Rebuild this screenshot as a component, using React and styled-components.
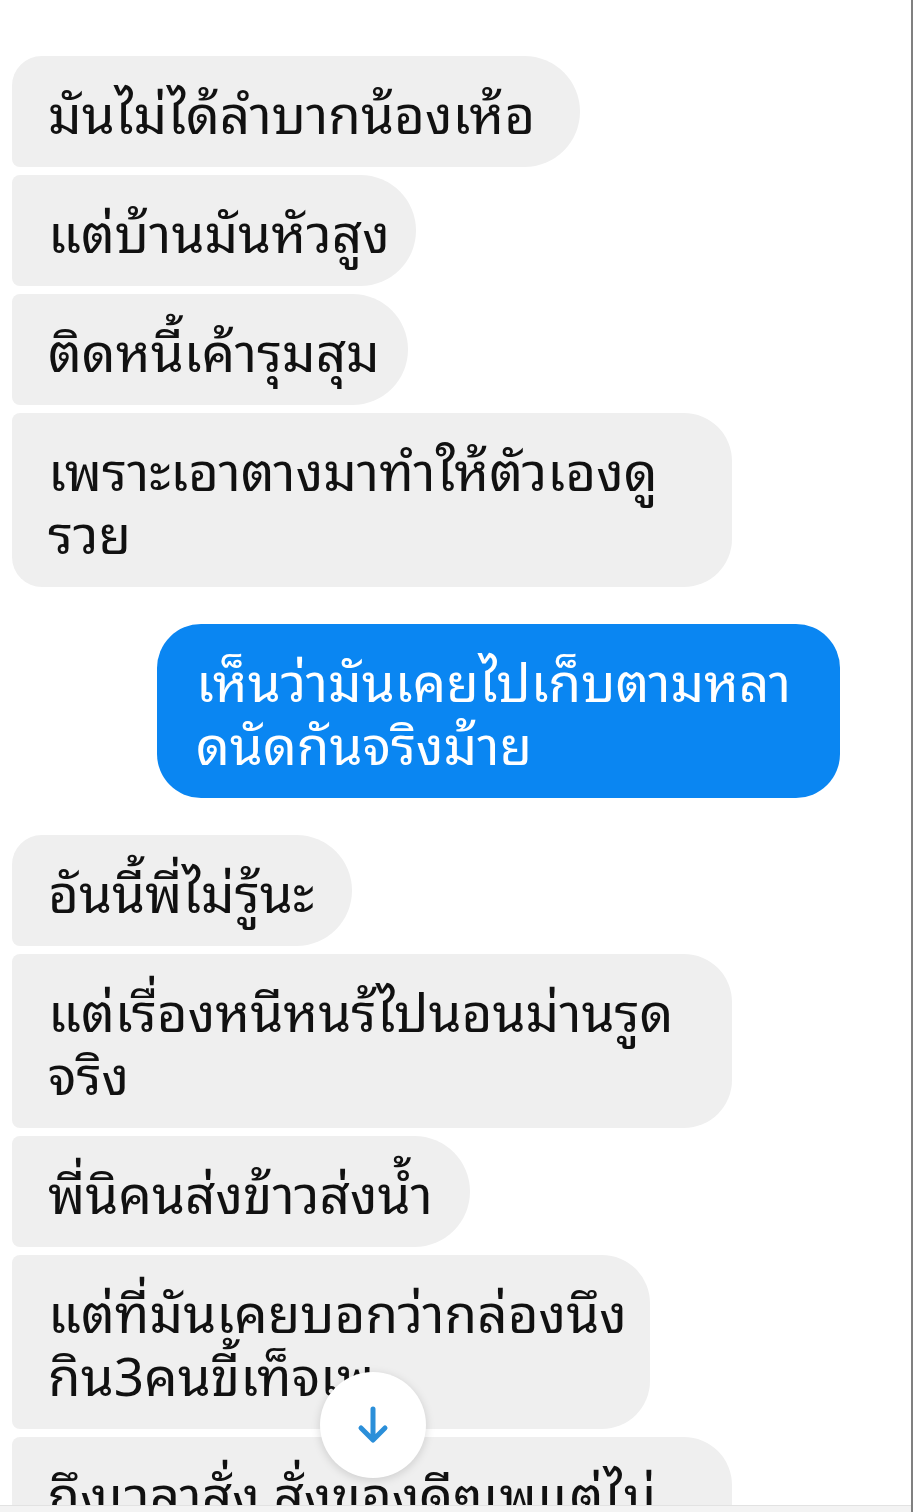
import React from "react";
import styled, { createGlobalStyle } from "styled-components";

const Global = createGlobalStyle`
  html, body { margin: 0; padding: 0; background: #ffffff; overflow: hidden; }
  body { font-family: "Noto Sans Thai Looped", "Noto Sans Thai", "Noto Sans", "DejaVu Sans", sans-serif; }
`;

const Screen = styled.div`
  position: relative;
  width: 913px;
  height: 1512px;
  box-sizing: border-box;
  overflow: hidden;
  background: #ffffff;
  border-right: 2px solid #808080;
`;

const Thread = styled.div`
  display: flex;
  flex-direction: column;
  padding: 56px 0 0 12px;
`;

const Group = styled.div`
  display: flex;
  flex-direction: column;
  align-items: ${(p) => (p.$mine ? "flex-end" : "flex-start")};
  gap: 8px;
  margin-bottom: 37px;
  padding-right: ${(p) => (p.$mine ? "71px" : "0")};
`;

const Bubble = styled.div`
  box-sizing: border-box;
  padding: 23px 30px 25px 36px;
  padding-left: ${(p) => (p.$mine ? "39px" : "36px")};
  font-size: 53px;
  line-height: 63px;
  color: ${(p) => (p.$mine ? "#ffffff" : "#111111")};
  background: ${(p) => (p.$mine ? "#0a86f2" : "#efefef")};
  border-radius: ${(p) => p.$radius};
  white-space: nowrap;
`;

const Line = styled.span`
  display: block;
`;

const ScrollDown = styled.button`
  position: absolute;
  left: 320px;
  top: 1372px;
  width: 106px;
  height: 106px;
  border-radius: 50%;
  border: none;
  background: #ffffff;
  box-shadow: 0 2px 10px rgba(0, 0, 0, 0.15);
  display: flex;
  align-items: center;
  justify-content: center;
  padding: 0;
`;

const BottomEdge = styled.div`
  position: absolute;
  left: 0;
  right: 0;
  bottom: 0;
  height: 6px;
  background: #f3f3f3;
  border-top: 1px solid #e2e2e2;
`;

function radiusFor(pos, big) {
  const r = big ? "48px" : "56px";
  if (pos === "single") return `30px ${r} ${r} 30px`;
  if (pos === "first") return `30px ${r} ${r} 8px`;
  if (pos === "middle") return `8px ${r} ${r} 8px`;
  return `8px ${r} ${r} 30px`;
}

const groups = [
  {
    mine: false,
    items: [
      { lines: ["มันไม่ได้ลำบากน้องเห้อ"], w: 568 },
      { lines: ["แต่บ้านมันหัวสูง"], w: 404 },
      { lines: ["ติดหนี้เค้ารุมสุม"], w: 396 },
      { lines: ["เพราะเอาตางมาทำให้ตัวเองดู", "รวย"], w: 720 },
    ],
  },
  {
    mine: true,
    items: [{ lines: ["เห็นว่ามันเคยไปเก็บตามหลา", "ดนัดกันจริงม้าย"], w: 683 }],
  },
  {
    mine: false,
    items: [
      { lines: ["อันนี้พี่ไม่รู้นะ"], w: 340 },
      { lines: ["แต่เรื่องหนีหนร้ไปนอนม่านรูด", "จริง"], w: 720 },
      { lines: ["พี่นิคนส่งข้าวส่งน้ำ"], w: 458 },
      { lines: ["แต่ที่มันเคยบอกว่ากล่องนึง", "กิน3คนขี้เท็จเพ"], w: 638 },
      { lines: ["ถึงเวลาสั่ง สั่งของดีๆเพแต่ไม่", "จ่าย"], w: 720 },
    ],
  },
];

export default function App() {
  return (
    <>
      <Global />
      <Screen>
        <Thread>
          {groups.map((g, gi) => (
            <Group key={gi} $mine={g.mine}>
              {g.items.map((m, i) => {
                const n = g.items.length;
                let pos = "single";
                if (n > 1) pos = i === 0 ? "first" : i === n - 1 ? "last" : "middle";
                const big = m.lines.length > 1;
                const radius = g.mine ? "44px" : radiusFor(pos, big);
                return (
                  <Bubble key={i} $mine={g.mine} $radius={radius} style={{ width: m.w }}>
                    {m.lines.map((l, li) => (
                      <Line key={li}>{l}</Line>
                    ))}
                  </Bubble>
                );
              })}
            </Group>
          ))}
        </Thread>
        <ScrollDown aria-label="Scroll to bottom">
          <svg width="40" height="44" viewBox="0 0 40 44" fill="none">
            <path d="M20 6 V36 M8 25 L20 37 L32 25" stroke="#2b8fd9" strokeWidth="5" strokeLinecap="round" strokeLinejoin="round" />
          </svg>
        </ScrollDown>
        <BottomEdge />
      </Screen>
    </>
  );
}
